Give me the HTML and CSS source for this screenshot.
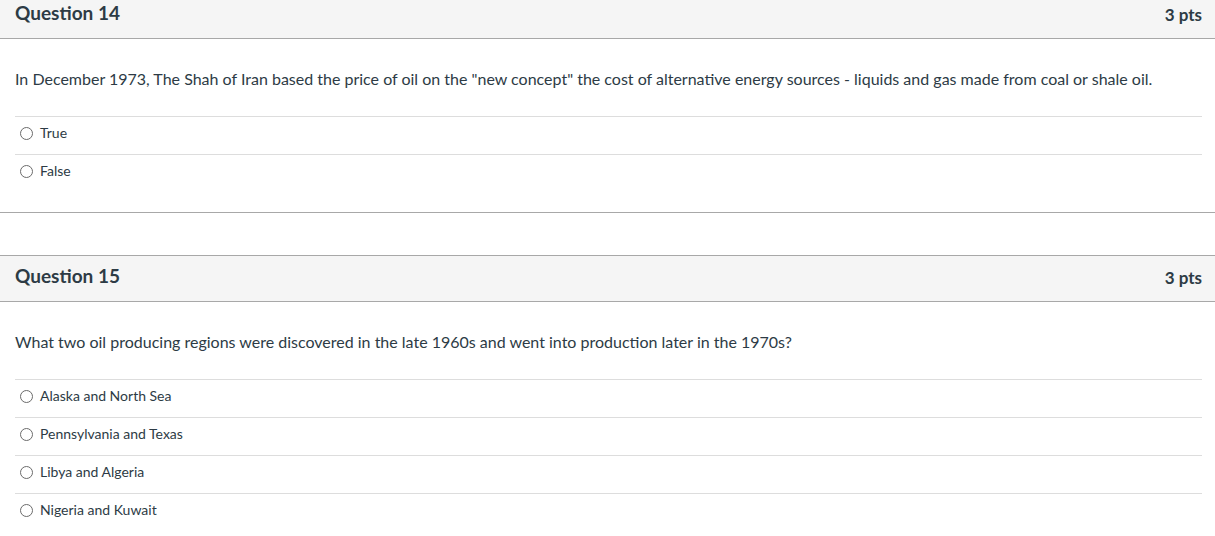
FILE: index.html
```html
<!DOCTYPE html>
<html lang="en">
<head>
<meta charset="utf-8">
<title>Quiz</title>
<link rel="stylesheet" href="styles.css">
</head>
<body>
<div class="quiz">
  <div class="question">
    <div class="q-header">
      <span class="q-name">Question 14</span>
      <span class="q-points">3 pts</span>
    </div>
    <div class="q-body">
      <p class="q-text">In December 1973, The Shah of Iran based the price of oil on the "new concept" the cost of alternative energy sources - liquids and gas made from coal or shale oil.</p>
      <div class="answers">
        <label class="answer"><span class="radio"></span><span>True</span></label>
        <label class="answer"><span class="radio"></span><span>False</span></label>
      </div>
    </div>
  </div>
  <div class="question">
    <div class="q-header">
      <span class="q-name">Question 15</span>
      <span class="q-points">3 pts</span>
    </div>
    <div class="q-body">
      <p class="q-text">What two oil producing regions were discovered in the late 1960s and went into production later in the 1970s?</p>
      <div class="answers">
        <label class="answer"><span class="radio"></span><span>Alaska and North Sea</span></label>
        <label class="answer"><span class="radio"></span><span>Pennsylvania and Texas</span></label>
        <label class="answer"><span class="radio"></span><span>Libya and Algeria</span></label>
        <label class="answer"><span class="radio"></span><span>Nigeria and Kuwait</span></label>
      </div>
    </div>
  </div>
</div>
</body>
</html>
```

FILE: styles.css
```css
html, body {
  margin: 0;
  padding: 0;
  background: #ffffff;
}
body {
  font-family: Lato, "Open Sans", Arial, sans-serif;
  color: #2d3b45;
  overflow: hidden;
}
.quiz {
  margin-top: -8px;
  display: flex;
  flex-direction: column;
  gap: 42px;
}
.question {
  border-bottom: 1px solid #a8a8a8;
}
.q-header {
  display: flex;
  justify-content: space-between;
  align-items: center;
  height: 39px;
  padding: 0 13px 6px 15px;
  background: #f5f5f5;
  border-top: 1px solid #a8a8a8;
  border-bottom: 1px solid #a8a8a8;
  font-weight: 700;
}
.q-name {
  font-size: 19px;
}
.q-points {
  font-size: 17px;
  padding-top: 4px;
}
.q-body {
  padding: 0 13px 20px 15px;
}
.q-text {
  margin: 28px 0 25px;
  font-size: 16px;
  line-height: 24px;
}
.answers {
  display: flex;
  flex-direction: column;
}
.answer {
  display: flex;
  align-items: center;
  gap: 7px;
  padding: 7px 0 12px;
  border-top: 1px solid #dddddd;
  font-size: 14px;
  line-height: 18px;
}
.radio {
  width: 11px;
  height: 11px;
  margin-left: 5px;
  border: 1px solid #6b6b6b;
  border-radius: 50%;
  background: #fff;
  flex: none;
}
```
